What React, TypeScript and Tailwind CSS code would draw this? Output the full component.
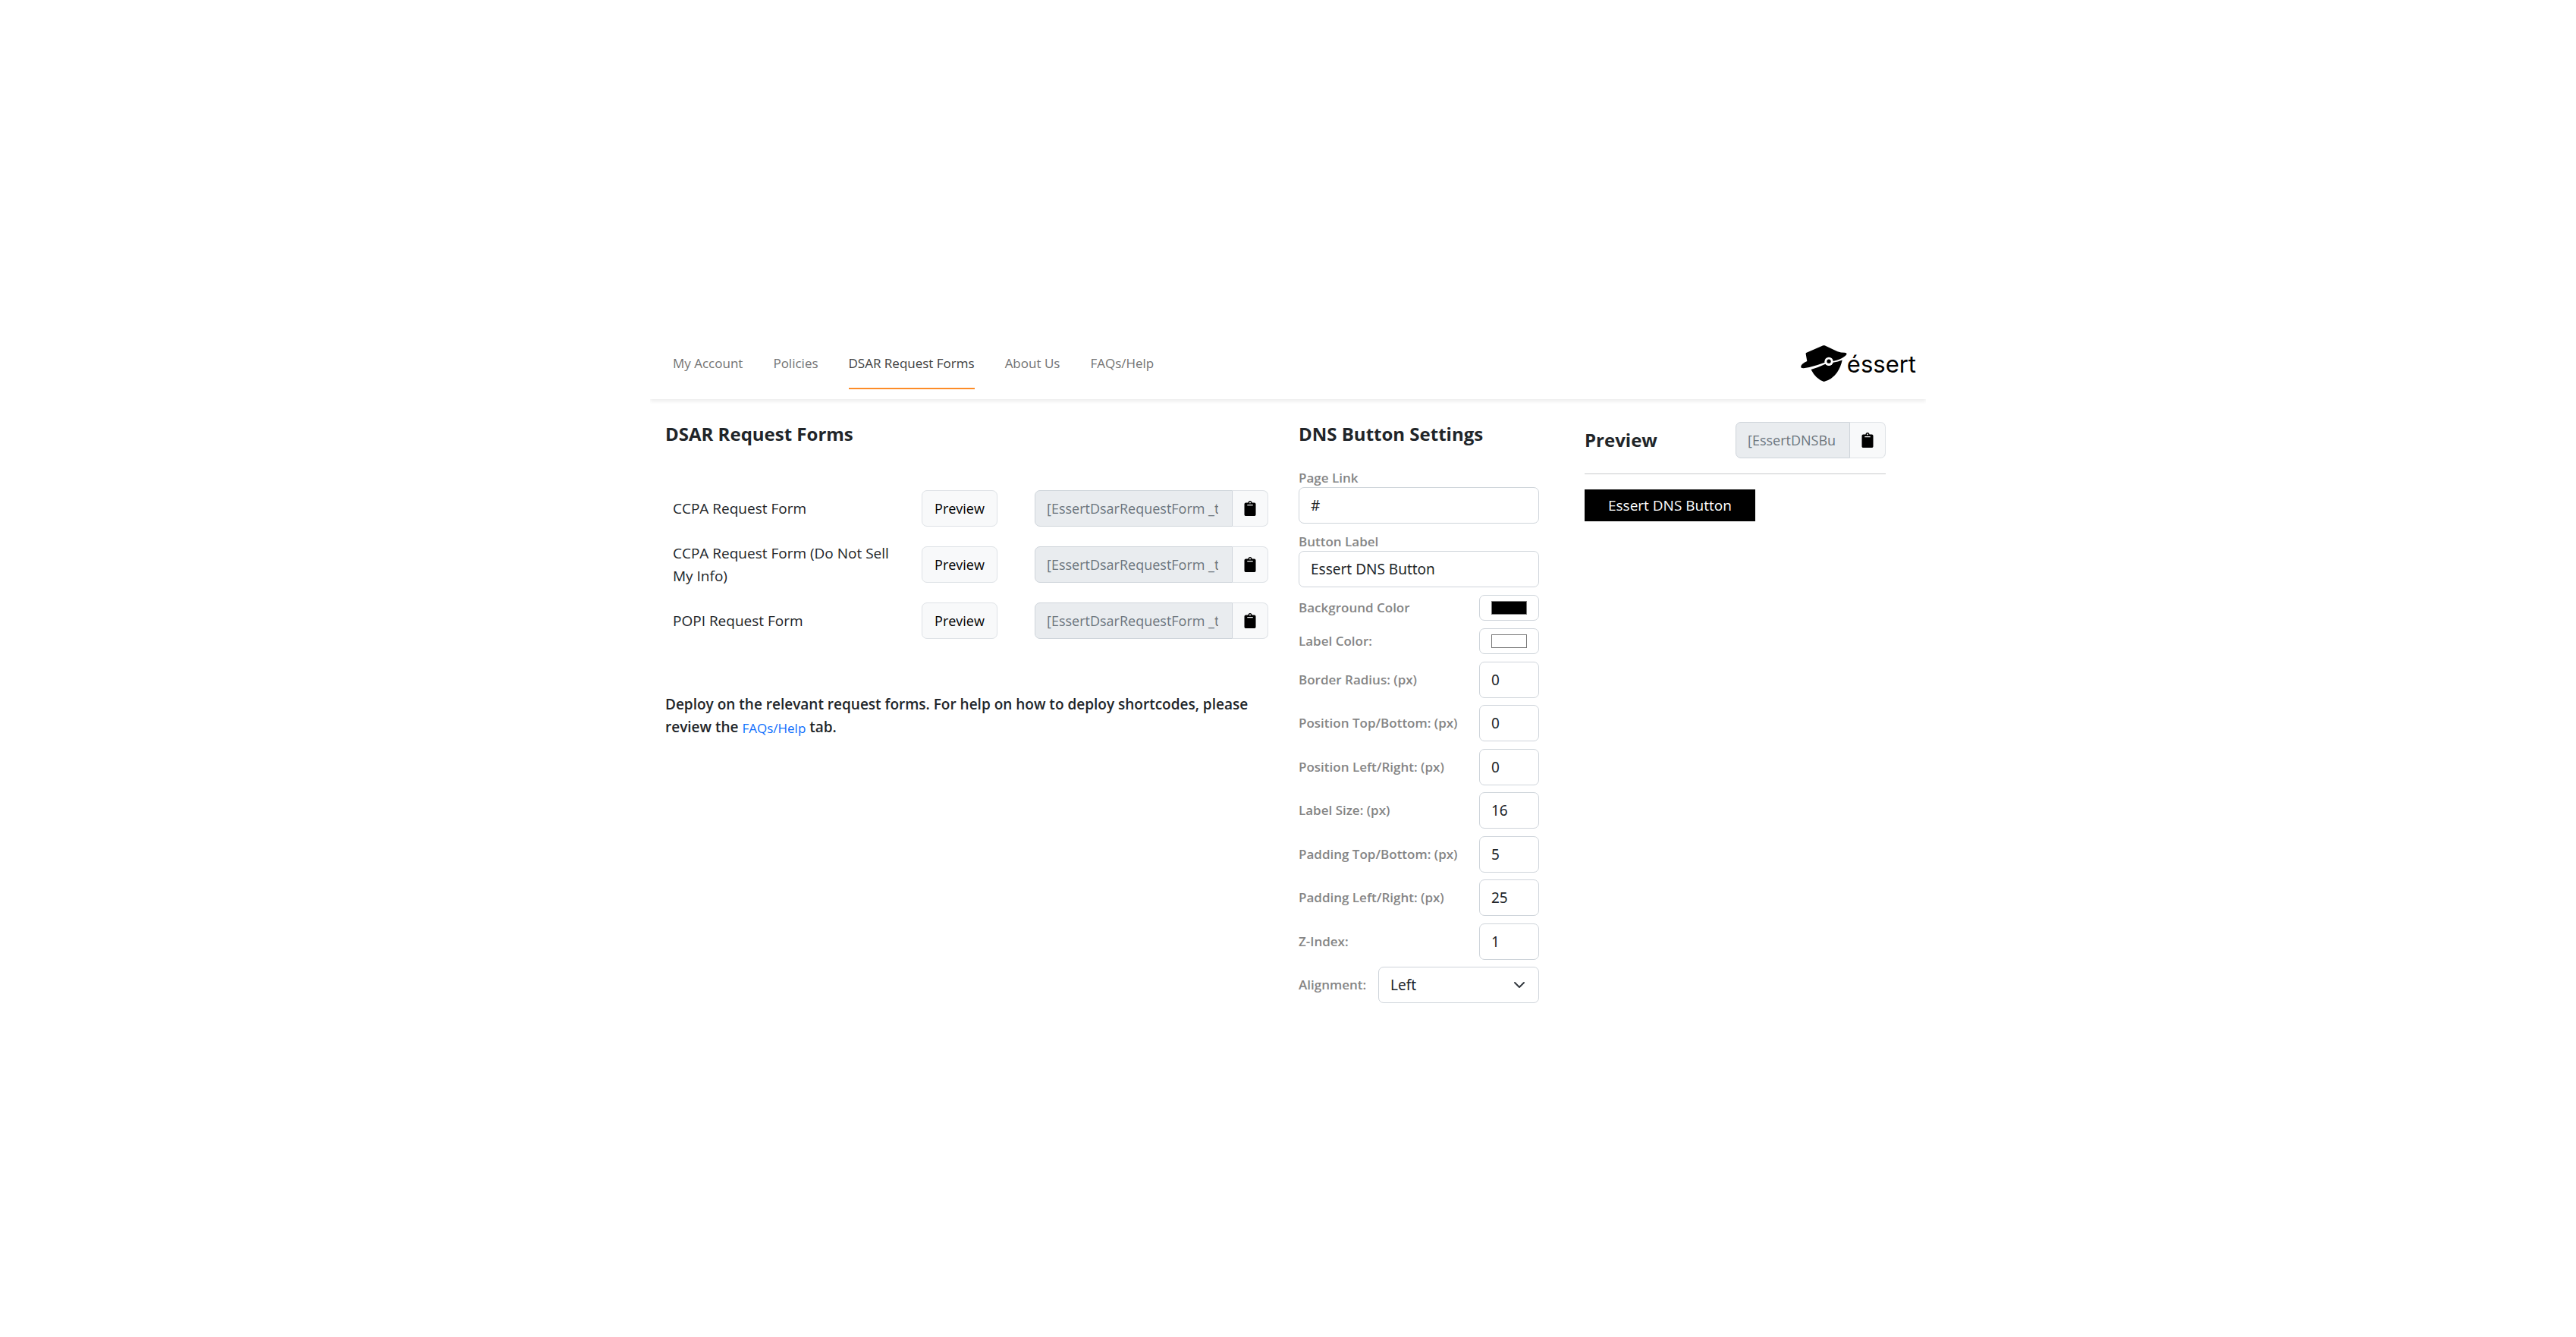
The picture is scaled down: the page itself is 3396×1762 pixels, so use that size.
import { useState } from "react";
import { FaClipboard } from "react-icons/fa";

const navItems = ["My Account", "Policies", "DSAR Request Forms", "About Us", "FAQs/Help"];

const requestForms = [
  { name: "CCPA Request Form", code: "[EssertDsarRequestForm _type=ccpa]" },
  { name: "CCPA Request Form (Do Not Sell My Info)", code: "[EssertDsarRequestForm _type=dns]" },
  { name: "POPI Request Form", code: "[EssertDsarRequestForm _type=popi]" },
];

const numberFields = [
  { id: "border-radius", label: "Border Radius: (px)", value: "0" },
  { id: "position-y", label: "Position Top/Bottom: (px)", value: "0" },
  { id: "position-x", label: "Position Left/Right: (px)", value: "0" },
  { id: "label-size", label: "Label Size: (px)", value: "16" },
  { id: "padding-y", label: "Padding Top/Bottom: (px)", value: "5" },
  { id: "padding-x", label: "Padding Left/Right: (px)", value: "25" },
  { id: "z-index", label: "Z-Index:", value: "1" },
];

const fieldClass =
  "h-12 rounded-[7px] border border-[#ced4da] bg-white px-[15px] font-['Noto_Sans',sans-serif] text-[19px] text-[#212529] outline-none focus:border-[#86b7fe]";
const labelClass = "text-[17px] leading-6 font-semibold text-[#858585]";

function Logo() {
  return (
    <a href="#home" aria-label="éssert" className="flex h-12 items-center text-black">
      <svg viewBox="38 41 186 147" className="h-12 w-[61px]" aria-hidden="true">
        <path
          fill="#000"
          d="M58 76Q57 72 61 71L128 42Q131 41 134 42L186 66Q200 71 215 71Q224 71 223 77Q219 86 196 97Q184 102 168 105A18 18 0 0 0 134 111Q100 124 72 130Q45 136 39 131Q36 125 44 117Q51 110 63 105Z"
        />
        <path
          fill="#000"
          d="M79 139Q108 131 137 117A18 18 0 0 0 168 111Q188 108 205 101Q199 130 184 151Q164 179 131 188Q98 177 79 139Z"
        />
        <circle cx="151" cy="106" r="17" fill="#fff" />
        <circle cx="151" cy="106" r="8" fill="#000" />
      </svg>
      <span className="pt-0.5 font-['Inter',sans-serif] text-[31px] leading-12">éssert</span>
    </a>
  );
}

function Shortcode({ code, label }: { code: string; label: string }) {
  return (
    <div className="flex h-12 min-w-0 flex-1">
      <input
        type="text"
        disabled
        aria-label={label}
        value={code}
        className="min-w-0 flex-1 rounded-l-[7px] border border-[#ced4da] bg-[#e9ecef] pr-[18px] pl-[15px] text-[18px] text-[#6c757d]"
      />
      <button
        type="button"
        aria-label={`Copy ${label}`}
        className="flex w-[47px] items-center justify-center rounded-r-[7px] border border-l-0 border-[#dee2e6] bg-[#f8f9fa] text-black"
      >
        <FaClipboard size={20} />
      </button>
    </div>
  );
}

function ColorField({ id, label, initial }: { id: string; label: string; initial: string }) {
  const [color, setColor] = useState(initial);
  return (
    <div className="flex items-center justify-between">
      <label htmlFor={id} className={labelClass}>
        {label}
      </label>
      <input
        id={id}
        type="color"
        value={color}
        onChange={(e) => setColor(e.target.value)}
        className="h-[34px] w-[79px] rounded-[7px] border border-[#ced4da] bg-white px-[13px] py-[3px]"
      />
    </div>
  );
}

export default function App() {
  const [buttonLabel, setButtonLabel] = useState("Essert DNS Button");

  return (
    <div className="min-h-screen bg-white pt-[446px] font-['Open_Sans','Noto_Sans',sans-serif] text-[#212529]">
      <div className="mx-auto max-w-[1682px]">
        <header className="flex items-start justify-between pr-[13px] pb-[13px] pl-[30px] shadow-[0_3px_5px_rgba(0,0,0,0.075)] [clip-path:inset(0_0_-10px_0)]">
          <nav className="flex gap-10">
            {navItems.map((item) => (
              <a
                key={item}
                href="#tab"
                aria-current={item === "DSAR Request Forms" ? "page" : undefined}
                className="border-b-2 border-transparent pt-5 pb-[19px] text-[17px] leading-[26px] whitespace-nowrap text-[#737373] aria-[current=page]:border-[#fd8c27] aria-[current=page]:text-[#404040]"
              >
                {item}
              </a>
            ))}
          </nav>
          <div className="pt-[9px]">
            <Logo />
          </div>
        </header>

        <main className="grid grid-cols-[795fr_317fr_417fr] gap-x-10 pt-7 pr-[53px] pl-5">
          <section>
            <h2 className="text-[24px] leading-9 font-bold">DSAR Request Forms</h2>
            <ul className="mt-[43px]">
              {requestForms.map((form) => (
                <li key={form.name} className="flex min-h-[74px] items-center">
                  <span className="flex-1 pr-5 pl-2.5 text-[19px] leading-[30px]">{form.name}</span>
                  <button
                    type="button"
                    className="h-12 w-[100px] rounded-[7px] border border-[#dee2e6] bg-[#f8f9fa] text-[18px] text-black"
                  >
                    Preview
                  </button>
                  <div className="ml-[49px] flex w-[308px]">
                    <Shortcode code={form.code} label={`${form.name} shortcode`} />
                  </div>
                </li>
              ))}
            </ul>
            <p className="mt-[58px] text-[19px] leading-[30px] font-semibold">
              Deploy on the relevant request forms. For help on how to deploy shortcodes, please review the{" "}
              <a href="#faqs" className="inline-block align-middle text-[17px] leading-6 font-normal text-[#0d6efd]">
                FAQs/Help
              </a>{" "}
              tab.
            </p>
          </section>

          <section>
            <h2 className="text-[24px] leading-9 font-bold">DNS Button Settings</h2>
            <form className="mt-7 flex flex-col gap-2.5">
              <div className="flex flex-col">
                <label htmlFor="page-link" className={labelClass}>
                  Page Link
                </label>
                <input id="page-link" type="text" defaultValue="#" className={fieldClass} />
              </div>
              <div className="flex flex-col pt-0.5">
                <label htmlFor="button-label" className={labelClass}>
                  Button Label
                </label>
                <input
                  id="button-label"
                  type="text"
                  value={buttonLabel}
                  onChange={(e) => setButtonLabel(e.target.value)}
                  className={fieldClass}
                />
              </div>
              <ColorField id="background-color" label="Background Color" initial="#000000" />
              <ColorField id="label-color" label="Label Color:" initial="#ffffff" />
              <div className="flex min-h-[450px] flex-col justify-between">
                {numberFields.map((field) => (
                  <div key={field.id} className="flex items-center justify-between">
                    <label htmlFor={field.id} className={labelClass}>
                      {field.label}
                    </label>
                    <input
                      id={field.id}
                      type="text"
                      inputMode="numeric"
                      defaultValue={field.value}
                      className={`${fieldClass} w-[79px]`}
                    />
                  </div>
                ))}
                <div className="flex items-center justify-between">
                  <label htmlFor="alignment" className={labelClass}>
                    Alignment:
                  </label>
                  <div className="relative w-[212px]">
                    <select id="alignment" defaultValue="Left" className={`${fieldClass} w-full appearance-none`}>
                      <option>Left</option>
                      <option>Right</option>
                    </select>
                    <svg
                      viewBox="0 0 16 16"
                      className="pointer-events-none absolute top-4 right-[18px] size-4"
                      fill="none"
                      stroke="#343a40"
                      strokeWidth="2"
                      strokeLinecap="round"
                      strokeLinejoin="round"
                      aria-hidden="true"
                    >
                      <path d="m2 5 6 6 6-6" />
                    </svg>
                  </div>
                </div>
              </div>
            </form>
          </section>

          <section className="pt-0.5 pl-5">
            <div className="flex items-center justify-between">
              <h2 className="text-[24px] leading-9 font-bold">Preview</h2>
              <div className="flex w-[198px]">
                <Shortcode code="[EssertDNSButton]" label="DNS button shortcode" />
              </div>
            </div>
            <hr className="mt-5 border-[#c8cacc]" />
            <button type="button" className="mt-5 h-[42px] bg-black px-[31px] text-[19px] text-white">
              {buttonLabel}
            </button>
          </section>
        </main>
      </div>
    </div>
  );
}
